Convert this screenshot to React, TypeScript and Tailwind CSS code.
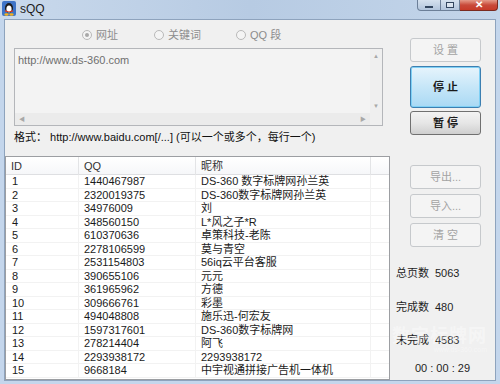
import React from "react";

const rows: [string, string, string][] = [
  ["1", "1440467987", "DS-360 数字标牌网孙兰英"],
  ["2", "2320019375", "DS-360数字标牌网孙兰英"],
  ["3", "34976009", "刘"],
  ["4", "348560150", "L*风之子*R"],
  ["5", "610370636", "卓策科技-老陈"],
  ["6", "2278106599", "莫与青空"],
  ["7", "2531154803", "56iq云平台客服"],
  ["8", "390655106", "元元"],
  ["9", "361965962", "方德"],
  ["10", "309666761", "彩墨"],
  ["11", "494048808", "施乐迅-何宏友"],
  ["12", "1597317601", "DS-360数字标牌网"],
  ["13", "278214404", "阿飞"],
  ["14", "2293938172", "2293938172"],
  ["15", "9668184", "中宇视通拼接广告机一体机"],
];

function Radio({ label, checked }: { label: string; checked?: boolean }) {
  return (
    <div className="flex items-center gap-[4px] text-[#8d8d8d]">
      <span className="flex h-[10px] w-[10px] items-center justify-center rounded-full border border-[#b9b9b9] bg-[#f4f4f4]">
        {checked && <span className="h-[4px] w-[4px] rounded-full bg-[#a8a8a8]" />}
      </span>
      <span>{label}</span>
    </div>
  );
}

function DisabledButton({ label, className = "" }: { label: string; className?: string }) {
  return (
    <div
      className={`flex h-[24px] w-[71px] items-center justify-center rounded-[3px] border border-[#c6c9cc] bg-[#f4f4f4] text-[#a3a3a3] ${className}`}
    >
      {label}
    </div>
  );
}

export default function App() {
  return (
    <div className="relative flex h-[384px] w-[500px] flex-col overflow-hidden bg-[#c4d6ec] font-['Liberation_Sans','Noto_Sans_CJK_SC',sans-serif] text-[11px] text-[#1e1e1e]">
      {/* title bar */}
      <div className="flex h-[19px] items-start bg-gradient-to-r from-[#c9d9ec] via-[#b7cbe3] to-[#c3d5ea]">
        <svg width="14" height="15" viewBox="0 0 14 15" className="ml-[2px] mt-[1px]">
          <rect x="0" y="0" width="14" height="15" rx="2" fill="#3d74c8" />
          <ellipse cx="7" cy="7" rx="4" ry="5" fill="#1b1b1b" />
          <ellipse cx="7" cy="8" rx="2.6" ry="3.6" fill="#fff" />
          <path d="M3 9 L7 10.5 L11 9 L10.5 11 L3.5 11 Z" fill="#e03a1e" />
          <ellipse cx="4.5" cy="13.5" rx="2.2" ry="1.2" fill="#f4b21c" />
          <ellipse cx="9.5" cy="13.5" rx="2.2" ry="1.2" fill="#f4b21c" />
        </svg>
        <span className="ml-[4px] mt-[2px] text-[12px] leading-[14px] text-[#1b1b1b]">sQQ</span>
        <div className="ml-auto mr-[2px] flex h-[11px]">
          <div className="flex w-[24px] items-end justify-center rounded-bl-[4px] border border-t-0 border-[#6c7f98] bg-gradient-to-b from-[#d5e1ee] to-[#b2c5dc] pb-[2px]">
            <span className="h-[2px] w-[8px] border border-[#33465f] bg-white" />
          </div>
          <div className="flex w-[19px] items-center justify-center border-b border-r border-[#6c7f98] bg-gradient-to-b from-[#d5e1ee] to-[#b2c5dc]">
            <span className="h-[6px] w-[8px] border border-[#33465f] bg-white/40" />
          </div>
          <div className="flex w-[38px] items-center justify-center rounded-br-[4px] border-b border-r border-[#7a2a20] bg-gradient-to-b from-[#e49a8a] via-[#c8493a] to-[#c73a28]">
            <span className="text-[10px] font-bold leading-[10px] text-white">✕</span>
          </div>
        </div>
      </div>

      {/* client area */}
      <div className="mx-[4px] mb-[3px] flex flex-1 border border-[#8ea3bd] bg-[#f0f0f0]">
        {/* left column */}
        <div className="flex w-[385px] flex-col">
          <div className="ml-[77px] mt-[7px] flex h-[16px] items-center">
            <Radio label="网址" checked />
            <div className="ml-[36px]">
              <Radio label="关键词" />
            </div>
            <div className="ml-[35px]">
              <Radio label="QQ 段" />
            </div>
          </div>

          {/* textarea */}
          <div className="ml-[9px] mt-[5px] flex h-[78px] w-[369px] flex-col border border-[#b4b6ba] bg-[#f3f3f3]">
            <div className="flex flex-1">
              <div className="flex-1 px-[3px] pt-[3px] text-[#6f6f6f]">http://www.ds-360.com</div>
              <div className="flex w-[12px] flex-col items-center justify-between bg-[#efefef] py-[4px] text-[6px] leading-[6px] text-[#a8a8a8]">
                <span>▲</span>
                <span>▼</span>
              </div>
            </div>
            <div className="flex h-[12px]">
              <div className="flex flex-1 items-center justify-between bg-[#ebebeb] px-[4px] text-[6px] leading-[6px] text-[#a8a8a8]">
                <span>◀</span>
                <span>▶</span>
              </div>
              <div className="w-[12px] bg-[#efefef]" />
            </div>
          </div>

          <div className="ml-[9px] h-[22px] leading-[22px] text-[#111]">
            格式：&nbsp;http://www.baidu.com[/...]&nbsp;(可以一个或多个，每行一个)
          </div>

          {/* table */}
          <div className="mt-[8px] flex-1 overflow-hidden border border-[#9c9ea2] bg-white">
            <div className="flex h-[18px] items-center border-b border-[#dedfe2] bg-gradient-to-b from-white to-[#f6f7f9] text-[#333]">
              <div className="w-[73px] border-r border-[#e3e4e6] pl-[5px] leading-[18px]">ID</div>
              <div className="w-[117px] border-r border-[#e3e4e6] pl-[5px] leading-[18px]">QQ</div>
              <div className="w-[175px] border-r border-[#e3e4e6] pl-[5px] leading-[18px]">昵称</div>
              <div className="flex-1" />
            </div>
            {rows.map(([id, qq, name]) => (
              <div key={id} className="flex h-[13.5px] border-b border-[#f2f2f2] leading-[13px] text-[#1a1a1a]">
                <div className="w-[73px] border-r border-[#f2f2f2] pl-[6px]">{id}</div>
                <div className="w-[117px] border-r border-[#f2f2f2] pl-[5px]">{qq}</div>
                <div className="w-[175px] border-r border-[#f2f2f2] whitespace-nowrap pl-[5px]">{name}</div>
                <div className="flex-1" />
              </div>
            ))}
          </div>
        </div>

        {/* right column */}
        <div className="flex flex-1 flex-col">
          <DisabledButton label="设 置" className="ml-[20px] mt-[18px]" />
          <div className="ml-[20px] mt-[4px] flex h-[42px] w-[71px] items-center justify-center rounded-[3px] border border-[#3c7fb1] bg-gradient-to-b from-[#e6f4fc] via-[#c6e6f8] to-[#a9d9f4] font-bold text-[#1a1a1a] shadow-[inset_0_0_0_1px_#7fd0f5]">
            停 止
          </div>
          <div className="ml-[20px] mt-[3px] flex h-[24px] w-[71px] items-center justify-center rounded-[3px] border border-[#707070] bg-gradient-to-b from-[#f3f3f3] via-[#e6e6e6] to-[#cfcfcf] font-bold text-[#1a1a1a]">
            暂 停
          </div>
          <DisabledButton label="导出..." className="ml-[20px] mt-[30px]" />
          <DisabledButton label="导入..." className="ml-[20px] mt-[5px]" />
          <DisabledButton label="清 空" className="ml-[20px] mt-[5px]" />

          <div className="ml-[6px] mt-[18px] flex h-[16px] items-center">
            <span className="w-[39px]">总页数</span>
            <span>5063</span>
          </div>
          <div className="ml-[6px] mt-[18px] flex h-[16px] items-center">
            <span className="w-[39px]">完成数</span>
            <span>480</span>
          </div>
          <div className="ml-[6px] mt-[17px] flex h-[16px] items-center">
            <span className="w-[39px]">未完成</span>
            <span>4583</span>
          </div>
          <div className="mt-[12px] h-[16px] text-center leading-[16px]">00 : 00 : 29</div>
        </div>
      </div>

      {/* watermark */}
      <div className="pointer-events-none absolute left-[392px] top-[326px] flex flex-col items-end whitespace-nowrap text-white/40">
        <span className="text-[18px] font-bold leading-[20px] tracking-[1px]">数字标牌网</span>
        <span className="text-[7px] leading-[8px]">www.ds-360.com</span>
      </div>
    </div>
  );
}
